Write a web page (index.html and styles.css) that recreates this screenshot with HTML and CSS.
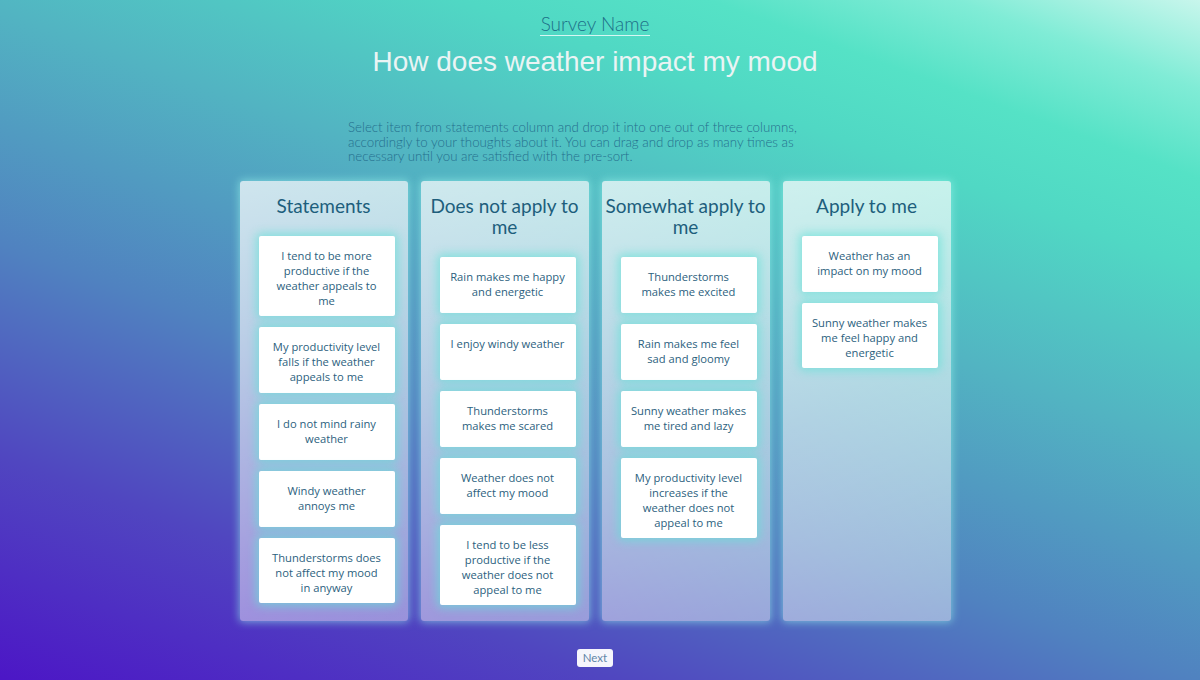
FILE: index.html
```html
<!DOCTYPE html>
<html lang="en">
<head>
<meta charset="utf-8">
<title>How does weather impact my mood</title>
<link rel="stylesheet" href="styles.css">
</head>
<body>
<main class="page">
  <header class="intro">
    <div class="survey-name">Survey Name</div>
    <h1 class="title">How does weather impact my mood</h1>
    <p class="instructions">Select item from statements column and drop it into one out of three columns,<br>accordingly to your thoughts about it. You can drag and drop as many times as<br>necessary until you are satisfied with the pre-sort.</p>
  </header>

  <section class="board">
    <div class="column">
      <h2 class="column-title">Statements</h2>
      <div class="card">I tend to be more productive if the weather appeals to me</div>
      <div class="card">My productivity level falls if the weather appeals to me</div>
      <div class="card">I do not mind rainy weather</div>
      <div class="card">Windy weather annoys me</div>
      <div class="card">Thunderstorms does not affect my mood in&nbsp;anyway</div>
    </div>
    <div class="column">
      <h2 class="column-title">Does not apply to me</h2>
      <div class="card">Rain makes me happy and energetic</div>
      <div class="card">I enjoy windy weather</div>
      <div class="card">Thunderstorms makes me scared</div>
      <div class="card">Weather does not affect my mood</div>
      <div class="card">I tend to be less productive if the weather does not appeal to me</div>
    </div>
    <div class="column">
      <h2 class="column-title">Somewhat apply to me</h2>
      <div class="card">Thunderstorms makes me excited</div>
      <div class="card">Rain makes me feel sad and gloomy</div>
      <div class="card">Sunny weather makes me tired and lazy</div>
      <div class="card">My productivity level increases if the weather does not appeal to me</div>
    </div>
    <div class="column">
      <h2 class="column-title">Apply to me</h2>
      <div class="card">Weather has an impact on my mood</div>
      <div class="card">Sunny weather makes me feel happy and energetic</div>
    </div>
  </section>

  <div class="actions">
    <button class="next-btn" type="button">Next</button>
  </div>
</main>
</body>
</html>
```

FILE: styles.css
```css
html, body {
  margin: 0;
  padding: 0;
  height: 100%;
}

body {
  background: linear-gradient(20deg,
    #4c16c6 0%,
    #5046c0 20%,
    #5082c0 39%,
    #52b4c2 60%,
    #50d8c4 76%,
    #55e2c6 84%,
    #80ecd6 92%,
    #c8f6ec 100%);
  font-family: "Lato", "Open Sans", sans-serif;
  overflow: hidden;
}

.page {
  width: 1190px;
  height: 680px;
  display: flex;
  flex-direction: column;
  align-items: center;
}

.intro {
  display: flex;
  flex-direction: column;
  align-items: center;
  padding-top: 13px;
}

.survey-name {
  font-family: "Lato", sans-serif;
  font-weight: 300;
  font-size: 19px;
  line-height: 22px;
  color: #1d6f88;
  border-bottom: 1px solid #d6f6f2;
  padding: 0 1px;
}

.title {
  margin: 10px 0 0;
  font-family: "Liberation Sans", Arial, sans-serif;
  font-weight: 400;
  font-size: 28px;
  line-height: 32px;
  color: #eaf4f4;
}

.instructions {
  margin: 42px 0 0;
  width: 494px;
  font-family: "Lato", sans-serif;
  font-weight: 300;
  font-size: 13.3px;
  line-height: 14.5px;
  color: #256f8e;
}

.board {
  margin-top: 17px;
  display: flex;
  gap: 13px;
}

.column {
  width: 168px;
  height: 440px;
  box-sizing: border-box;
  padding: 14px 13px 0 19px;
  border-radius: 3px;
  background: linear-gradient(160deg, rgba(255,255,255,0.72) 0%, rgba(255,255,255,0.55) 50%, rgba(255,255,255,0.42) 100%);
  box-shadow: 0 0 9px 1px rgba(150, 245, 235, 0.6);
  display: flex;
  flex-direction: column;
  align-items: flex-start;
}

.column-title {
  margin: 0 -13px 20px -19px;
  width: 168px;
  text-align: center;
  font-family: "Lato", sans-serif;
  font-weight: 400;
  font-size: 19px;
  line-height: 21px;
  color: #1d5e7c;
}

.card {
  width: 136px;
  min-height: 56px;
  box-sizing: border-box;
  padding: 12px 10px 8.5px;
  margin-bottom: 11px;
  background: #ffffff;
  border-radius: 2px;
  box-shadow: 0 0 10px 3px rgba(100, 225, 215, 0.65);
  text-align: center;
  font-family: "Open Sans", "Noto Sans", sans-serif;
  font-size: 11.2px;
  line-height: 15px;
  color: #2c5f7e;
}

.actions {
  margin-top: 25px;
}

.next-btn {
  height: 18px;
  padding: 0 6px;
  border: none;
  border-radius: 3px;
  background: rgba(255, 255, 255, 0.95);
  font-family: "Lato", sans-serif;
  font-size: 11.5px;
  line-height: 18px;
  color: #6286a8;
  cursor: pointer;
}
```
